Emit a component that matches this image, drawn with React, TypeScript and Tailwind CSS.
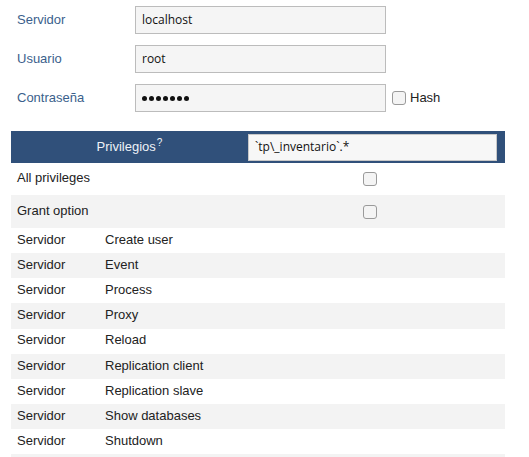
import React from 'react';

const rows = [
  'Create user',
  'Event',
  'Process',
  'Proxy',
  'Reload',
  'Replication client',
  'Replication slave',
  'Show databases',
  'Shutdown',
];

function Box() {
  return <span className="inline-block w-[14px] h-[14px] rounded-[3px] border border-[#9a9a9a] bg-[#f4f4f4]" />;
}

function Dots() {
  return (
    <span className="flex gap-[2px]" aria-label="password">
      {Array.from({ length: 7 }).map((_, i) => (
        <span key={i} className="w-[5px] h-[5px] rounded-full bg-[#111]" />
      ))}
    </span>
  );
}

export default function App() {
  const fields = [
    { label: 'Servidor', value: 'localhost' },
    { label: 'Usuario', value: 'root' },
    { label: 'Contraseña', value: '', hash: true },
  ];
  return (
    <div className="w-[529px] h-[457px] overflow-hidden bg-white font-['Liberation_Sans',Arial,sans-serif] text-[13px] text-[#222]">
      <div className="flex flex-col gap-[11px] pt-[6px]">
        {fields.map((f) => (
          <div key={f.label} className="flex items-center h-[28px]">
            <span className="w-[135px] pl-[17px] pb-[1px] text-[#3b5f8c]">{f.label}</span>
            <div className="w-[251px] h-[28px] border border-[#bcbcbc] bg-[#f5f5f5] flex items-center pl-[6px] text-[#111] font-['Open_Sans',sans-serif] text-[12px]">
              {f.hash ? <Dots /> : f.value}
            </div>
            {f.hash && (
              <div className="flex items-center ml-[6px] gap-[4px]">
                <Box />
                <span className="pb-[1px]">Hash</span>
              </div>
            )}
          </div>
        ))}
      </div>

      <div className="ml-[11px] w-[494px] mt-[19px]">
        <div className="flex items-center h-[32px] bg-[#30507a]">
          <div className="w-[237px] text-center text-[#eef2f7]">
            Privilegios<sup className="text-[10px] ml-[1px]">?</sup>
          </div>
          <div className="w-[249px] h-[27px] bg-[#f7f7f7] border border-[#c8c8c8] flex items-center pl-[6px] font-['Open_Sans',sans-serif] text-[12px] text-[#111]">
            `tp\_inventario`.*
          </div>
        </div>
        <div className="flex items-center h-[32px] bg-white">
          <span className="w-[352px] pl-[6px] pb-[2px]">All privileges</span>
          <Box />
        </div>
        <div className="flex items-center h-[33px] bg-[#f3f3f3]">
          <span className="w-[352px] pl-[6px] pb-[2px]">Grant option</span>
          <Box />
        </div>
        {rows.map((r, i) => (
          <div key={r} className={`flex items-center h-[25.15px] pb-[2px] ${i % 2 === 0 ? 'bg-white' : 'bg-[#f3f3f3]'}`}>
            <span className="w-[94px] pl-[6px]">Servidor</span>
            <span>{r}</span>
          </div>
        ))}
        <div className="h-[25px] bg-[#f3f3f3]" />
      </div>
    </div>
  );
}
